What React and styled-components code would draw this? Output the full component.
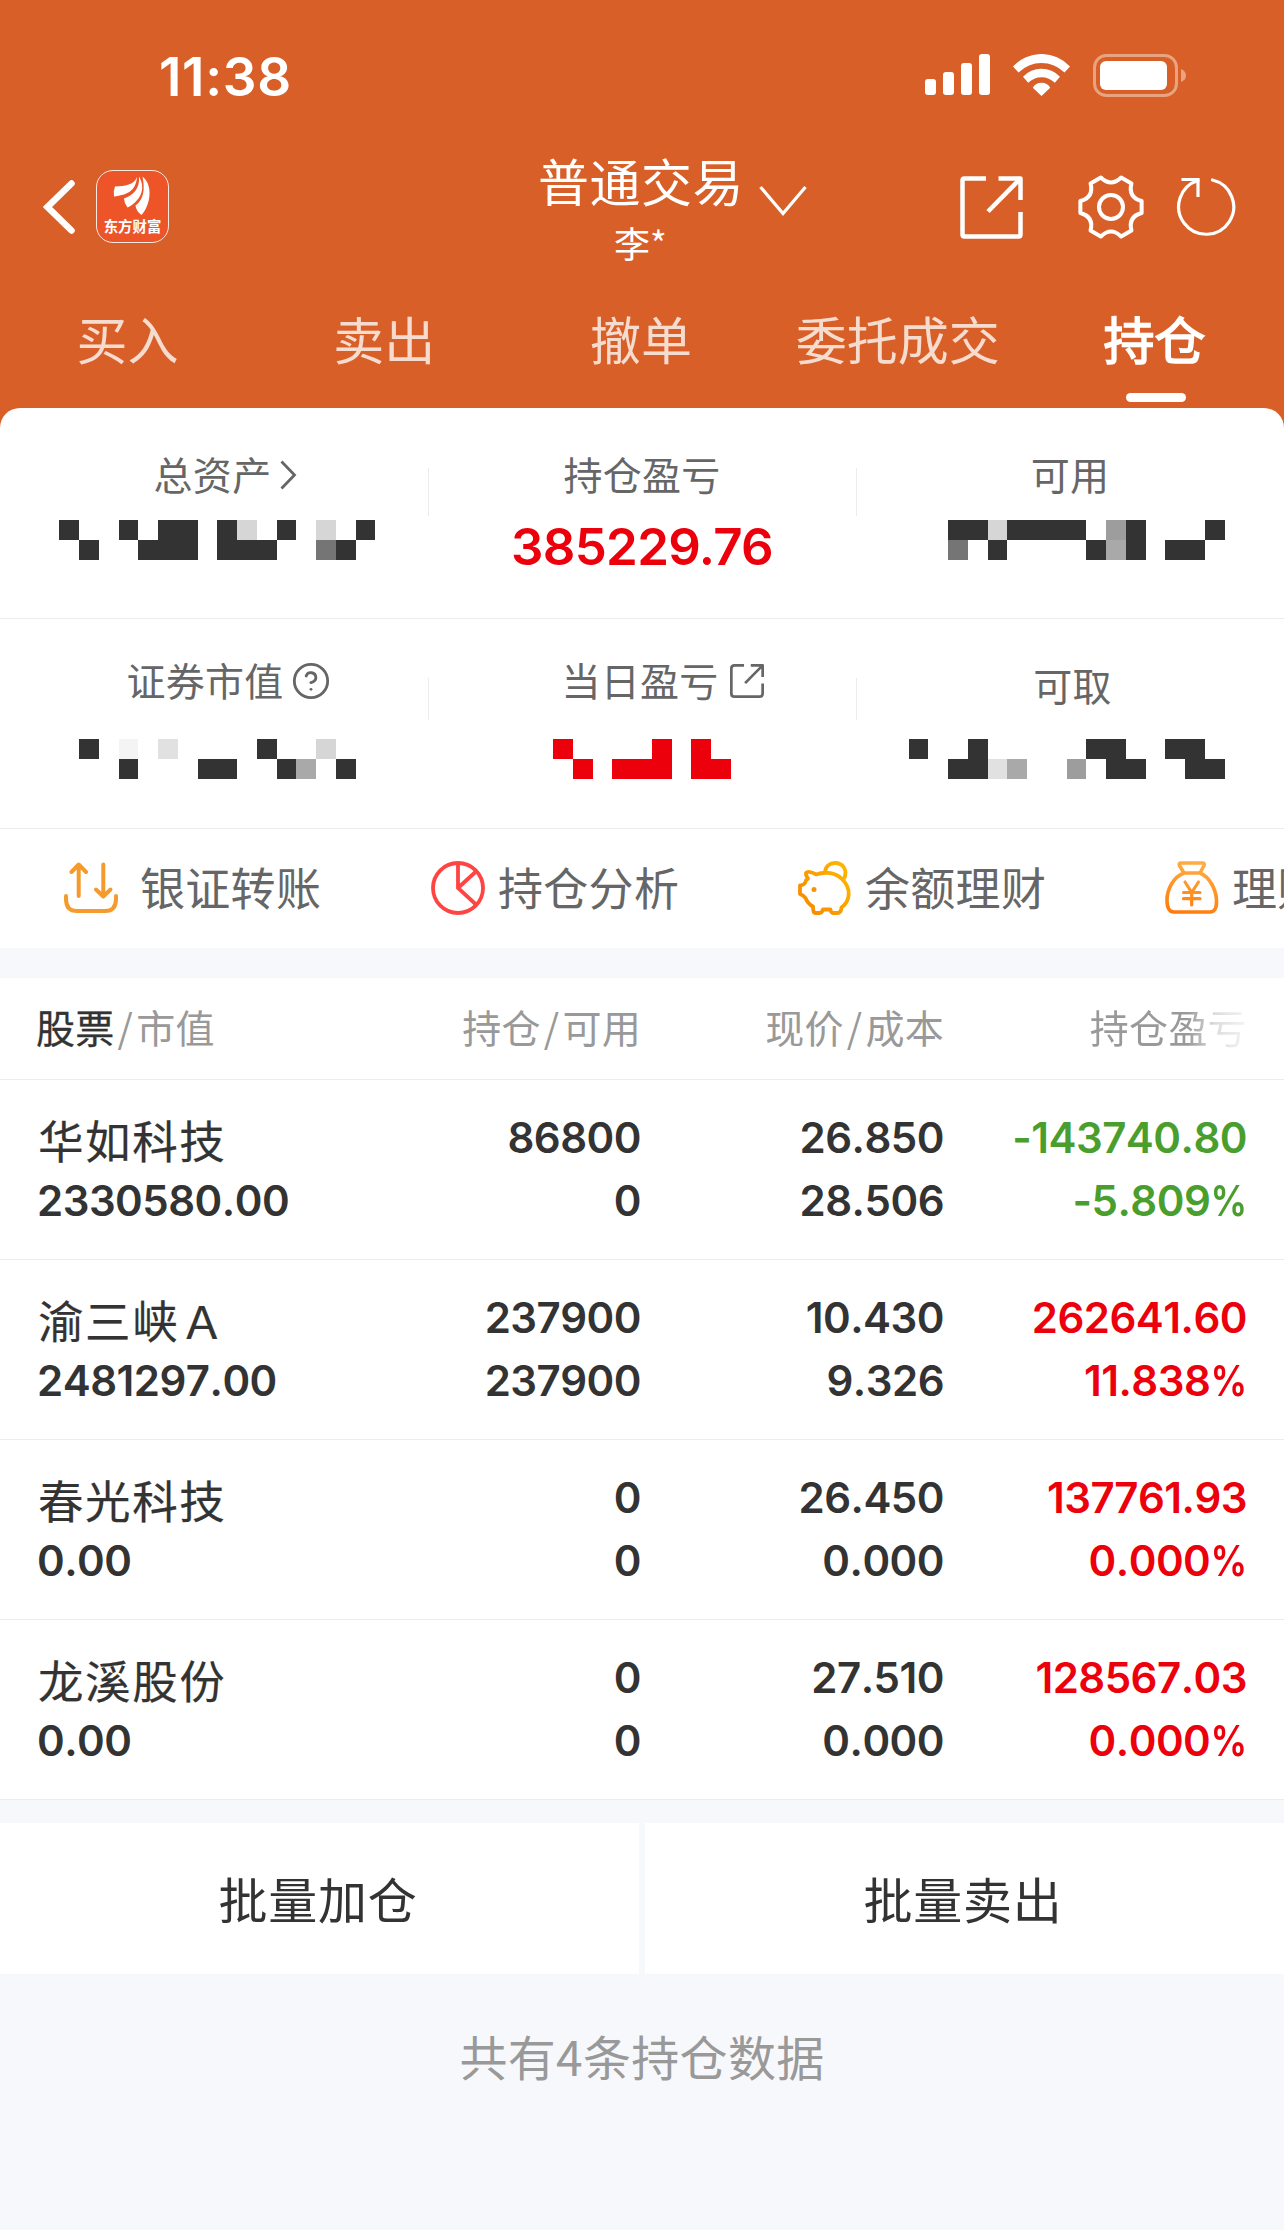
import styled, { createGlobalStyle } from 'styled-components'
import { FiHelpCircle } from 'react-icons/fi'

const GlobalStyle = createGlobalStyle`
  * {
    box-sizing: border-box;
  }

  body {
    margin: 0;
    background-color: #f7f8fb;
    color: #333;
    font-family: 'Noto Sans CJK SC', 'Inter', sans-serif;
  }
`

const Page = styled.div`
  width: 1284px;
  min-height: 2230px;
  overflow: hidden;
  background-color: #f7f8fb;
`

const Top = styled.header`
  background-color: #d85f28;
`

const StatusBar = styled.div`
  display: flex;
  justify-content: space-between;
  align-items: center;
  height: 150px;
  padding: 0 96px 0 159px;
`

const Time = styled.span`
  padding-top: 3px;
  font-family: 'Inter', sans-serif;
  font-size: 53px;
  font-weight: 600;
  line-height: 60px;
  letter-spacing: 0.7px;
  color: #fff;
`

const StatusIcons = styled.div`
  display: flex;
  align-items: center;
  gap: 23px;
`

const NavBar = styled.div`
  display: grid;
  grid-template-columns: 1fr 208px 1fr;
  height: 112px;
  color: #fff;
`

const NavLeft = styled.div`
  display: flex;
  align-items: center;
  gap: 20px;
  padding: 0 0 3px 43px;
`

const Logo = styled.div`
  display: flex;
  flex-direction: column;
  align-items: center;
  width: 73px;
  height: 73px;
  border: 1.5px solid #fbe9e0;
  border-radius: 17px;
  background-color: #ed5427;
`

const LogoText = styled.span`
  font-size: 14.4px;
  font-weight: 700;
  line-height: 16px;
`

const NavTitle = styled.div`
  padding-right: 3px;
  text-align: center;
  white-space: nowrap;
`

const Title = styled.h1`
  margin: 0;
  font-size: 51px;
  font-weight: 400;
  line-height: 60px;
  letter-spacing: 0.5px;
`

const UserName = styled.p`
  margin: 0;
  padding-top: 8px;
  font-size: 36px;
  line-height: 48px;
`

const NavRight = styled.div`
  display: flex;
  align-items: center;
  padding: 0 46px 2px 13px;
`

const Actions = styled.div`
  display: flex;
  align-items: center;
  margin-left: auto;
`

const Tabs = styled.nav`
  display: grid;
  grid-template-columns: repeat(5, 1fr);
  height: 146px;
`

const Tab = styled.div`
  display: flex;
  flex-direction: column;
  align-items: center;
  padding-top: 45px;
  font-size: 51px;
  line-height: 62px;
  text-indent: -2px;
  color: ${({ $active }) => ($active ? '#fff' : '#f6dccf')};
  -webkit-text-stroke: ${({ $active }) => ($active ? '1.6px' : '0')};

  &::after {
    content: '';
    width: 60px;
    height: 9px;
    margin-top: 24px;
    border-radius: 5px;
    background-color: ${({ $active }) => ($active ? '#fff' : 'transparent')};
  }
`

const Summary = styled.section`
  border-radius: 20px 20px 0 0;
  background-color: #fff;
`

const StatRow = styled.div`
  display: grid;
  grid-template-columns: repeat(3, 428px);
  height: ${({ $height }) => $height}px;
  border-bottom: 1px solid #ececec;
`

const Stat = styled.div`
  display: flex;
  flex-direction: column;
  background: linear-gradient(#ececec, #ececec) no-repeat
    0 ${({ $lineTop }) => $lineTop}px / 1px ${({ $lineHeight }) => $lineHeight}px;

  &:first-child {
    background: none;
  }
`

const StatLabel = styled.div`
  display: flex;
  justify-content: center;
  align-items: center;
  gap: ${({ $gap }) => $gap || 0}px;
  height: 50px;
  margin-top: ${({ $top }) => $top}px;
  padding-left: ${({ $indent }) => $indent || 0}px;
  font-size: 39px;
  line-height: 50px;
  letter-spacing: 0.3px;
  color: #666;

  svg {
    margin-top: 4px;
  }
`

const StatValue = styled.div`
  margin-top: 18px;
  font-family: 'Inter', sans-serif;
  font-size: 51px;
  font-weight: 600;
  line-height: 62px;
  letter-spacing: -0.7px;
  text-align: center;
  color: #ec000c;
`

const MosaicGrid = styled.div`
  display: grid;
  grid-template-columns: repeat(${({ $columns }) => $columns}, 19.754px);
  grid-auto-rows: 20px;
  margin-top: ${({ $top }) => $top}px;
  margin-left: ${({ $left }) => $left}px;
`

const MosaicCell = styled.span`
  background-color: ${({ $color }) => $color};
`

const Tools = styled.div`
  display: flex;
  height: 119px;
  padding-left: 64px;
  overflow: hidden;
`

const Tool = styled.div`
  display: flex;
  flex: none;
  align-items: center;
  gap: ${({ $gap }) => $gap}px;
  width: 367px;
  font-size: 45px;
  line-height: 60px;
  letter-spacing: 0.3px;
  color: #666;
  white-space: nowrap;

  svg {
    margin-top: -2px;
  }
`

const ToolText = styled.span`
  margin-top: -4px;
`

const Holdings = styled.section`
  margin-top: 30px;
  background-color: #fff;
`

const HoldingsRow = styled.div`
  display: grid;
  grid-template-columns: 1fr 302px 303px 303px;
  height: 180px;
  padding: 26px 37px 0 38px;
  border-bottom: 1px solid #ececec;
`

const HoldingsHead = styled(HoldingsRow)`
  height: 102px;
  padding-top: 23px;
  font-size: 39px;
  line-height: 50px;
  letter-spacing: 0.3px;
  color: #999;
`

const HeadCell = styled.div`
  text-align: ${({ $left }) => ($left ? 'left' : 'right')};
  margin-left: ${({ $left }) => ($left ? -2 : 0)}px;

  strong {
    font-weight: 400;
    color: #333;
    -webkit-text-stroke: 0.3px;
  }

  i {
    margin: 0 3px;
    font-style: normal;
  }
`

const FadingText = styled.span`
  background: linear-gradient(to right, #999 62%, #ddd 80%, #f4f4f4);
  background-clip: text;
  color: transparent;
`

const Cell = styled.div`
  display: flex;
  flex-direction: column;
  font-family: 'Inter', sans-serif;
  font-size: 42px;
  font-weight: 600;
  font-kerning: none;
  line-height: 63px;
  letter-spacing: -0.5px;
  text-align: right;
  color: ${({ $tone }) => ($tone === 'up' ? '#ec000c' : $tone === 'down' ? '#4a9e2e' : '#333')};
`

// 百分号比数字窄一些
const Percent = styled.span`
  display: inline-block;
  margin-left: -5px;
  transform: scaleX(0.87);
  transform-origin: right;
`

const StockCell = styled(Cell)`
  text-align: left;
  margin-left: -1px;
`

const StockName = styled.span`
  margin: 2px 0 -2px 1px;
  font-family: 'Noto Sans CJK SC', sans-serif;
  font-size: 45.5px;
  font-weight: 400;
  letter-spacing: 1.6px;
  -webkit-text-stroke: 0.2px;
`

const BatchActions = styled.div`
  display: grid;
  grid-template-columns: 639px 639px;
  gap: 6px;
  margin-top: 23px;
`

const BatchButton = styled.button`
  height: 151px;
  padding: 0 3px 3px 0;
  border: none;
  background-color: #fff;
  font-family: inherit;
  font-size: 49px;
  letter-spacing: 0.7px;
  color: #333;
`

const Footer = styled.p`
  margin: 0;
  padding-top: 46px;
  font-size: 48px;
  line-height: 70px;
  letter-spacing: 0.3px;
  text-align: center;
  color: #999;
`

const mosaicColors = {
  d: '#333',
  r: '#ec000c',
  m: '#757575',
  g: '#9d9d9d',
  a: '#a9a9a9',
  l: '#d6d6d6',
  e: '#e1e1e1',
  w: '#f4f4f4',
  '.': 'transparent',
}

const holdings = [
  { name: '华如科技', value: '2330580.00', amount: '86800', usable: '0', price: '26.850', cost: '28.506', profit: '-143740.80', rate: '-5.809', tone: 'down' },
  { name: '渝三峡Ａ', value: '2481297.00', amount: '237900', usable: '237900', price: '10.430', cost: '9.326', profit: '262641.60', rate: '11.838', tone: 'up' },
  { name: '春光科技', value: '0.00', amount: '0', usable: '0', price: '26.450', cost: '0.000', profit: '137761.93', rate: '0.000', tone: 'up' },
  { name: '龙溪股份', value: '0.00', amount: '0', usable: '0', price: '27.510', cost: '0.000', profit: '128567.03', rate: '0.000', tone: 'up' },
]

// 隐藏金额的马赛克
function Mosaic({ rows, top, left }) {
  return (
    <MosaicGrid $columns={rows[0].length} $top={top} $left={left}>
      {rows.join('').split('').map((c, i) => (
        <MosaicCell key={i} $color={mosaicColors[c]} />
      ))}
    </MosaicGrid>
  )
}

function SignalIcon() {
  return (
    <svg width="65" height="42" fill="#fff">
      <rect x="0" y="25" width="11" height="16" rx="3" />
      <rect x="18" y="18" width="11" height="23" rx="3" />
      <rect x="36" y="9" width="11" height="32" rx="3" />
      <rect x="54" y="0" width="11" height="41" rx="3" />
    </svg>
  )
}

function WifiIcon() {
  return (
    <svg width="57" height="43" fill="#fff">
      <path d="M0 12.5A38.7 38.7 0 0 1 57 12.5L51.5 18.5A32.6 32.6 0 0 0 5.5 18.5Z" />
      <path d="M10 22.7A25.4 25.4 0 0 1 47 22.7L41.8 28.7A19 19 0 0 0 15.2 28.7Z" />
      <path d="M19.8 33.7A10 10 0 0 1 37.2 33.7L28.5 42Z" />
    </svg>
  )
}

function BatteryIcon() {
  return (
    <svg width="95" height="43">
      <rect x="1.5" y="1.5" width="82" height="40" rx="12" fill="none" stroke="#e8a480" strokeWidth="3" />
      <rect x="7" y="7" width="67" height="29" rx="6" fill="#fff" />
      <path d="M88 15Q93 17 93 21.5Q93 26 88 28Z" fill="#e8a480" />
    </svg>
  )
}

function BackIcon() {
  return (
    <svg width="33" height="56" fill="none" stroke="#fff" strokeWidth="6.5" strokeLinecap="round">
      <path d="M28.5 4.5L4.5 28L28.5 51.5" />
    </svg>
  )
}

function LogoMark() {
  return (
    <svg width="70" height="47" fill="#fff">
      <path d="M39 6C36 14 27 15 17 15.5Q15 20 16 25.5C29 24 38 20 39 6Z" />
      <path d="M41 5.5C42 17 36 24 26 27.5Q26 32 29.5 36.5C41 31 49 19 41 5.5Z" />
      <path d="M44.5 5.5C47 18 46 28 37.5 34.5Q38 40 43.5 44C52 35 56 15 44.5 5.5Z" />
    </svg>
  )
}

const DownSvg = styled.svg`
  display: block;
  margin-bottom: 12px;
`

function ArrowDownIcon() {
  return (
    <DownSvg width="48" height="32" fill="none" stroke="#fff" strokeWidth="3.2">
      <path d="M1.5 2L24 28.5L46.5 2" />
    </DownSvg>
  )
}

function ShareIcon({ size, color, stroke, radius = 2 }) {
  return (
    <svg width={size} height={size} viewBox="0 0 63 63" fill="none" stroke={color} strokeWidth={stroke} strokeLinejoin="round">
      <path d={`M26 2.5H${2.5 + radius}Q2.5 2.5 2.5 ${2.5 + radius}V${60.5 - radius}Q2.5 60.5 ${2.5 + radius} 60.5H${60.5 - radius}Q60.5 60.5 60.5 ${60.5 - radius}V36`} />
      <path d="M38.5 2.5H60.5V24M60.5 2.5L28 35.5" />
    </svg>
  )
}

function polar(r, deg) {
  const t = (deg * Math.PI) / 180
  return `${(34 + r * Math.cos(t)).toFixed(2)} ${(34 + r * Math.sin(t)).toFixed(2)}`
}

const GearSvg = styled.svg`
  margin: 0 31px 0 54px;
`

function GearIcon() {
  const teeth = [0, 60, 120, 180, 240, 300]
  const d = teeth.map((a, i) => `${i ? 'L' : 'M'}${polar(31.2, a - 11)}L${polar(31.2, a + 11)}Q${polar(19.5, a + 30)} ${polar(31.2, a + 49)}`).join('')
  return (
    <GearSvg width="68" height="68" fill="none" stroke="#fff" strokeWidth="4" strokeLinejoin="round">
      <path d={`${d}Z`} />
      <circle cx="34" cy="34" r="12" />
    </GearSvg>
  )
}

function RefreshIcon() {
  return (
    <svg width="62" height="62" fill="none" stroke="#fff" strokeWidth="3.2">
      <path d="M36.5 4A27.5 27.5 0 1 1 22 4.5" strokeLinecap="round" />
      <path d="M5.5 3.5H22V21" />
    </svg>
  )
}

function ChevronIcon() {
  return (
    <svg width="17" height="30" fill="none" stroke="#666" strokeWidth="2.8">
      <path d="M1.5 1.5L14.5 15L1.5 28.5" />
    </svg>
  )
}

function TransferIcon() {
  return (
    <svg width="54" height="52" fill="none" stroke="#f59b2d" strokeWidth="4" strokeLinecap="round" strokeLinejoin="round">
      <path d="M14.7 34V3M7.5 10L14.7 2.5L22 10" />
      <path d="M39.3 2.5V34M32 27.5L39.3 34.5L46.5 27.5" />
      <path d="M2 34V37Q2 49 13 49H41Q52 49 52 37V34" />
    </svg>
  )
}

function PieIcon() {
  return (
    <svg width="54" height="54" fill="none" stroke="#ff4444" strokeWidth="3.8">
      <circle cx="27" cy="27" r="25" />
      <path d="M27 2V27L45.5 44M27 27L45.5 10" />
    </svg>
  )
}

function PiggyIcon() {
  return (
    <svg width="54" height="54" fill="none" stroke="url(#piggy)" strokeWidth="3.8" strokeLinejoin="round">
      <defs>
        <linearGradient id="piggy" gradientUnits="userSpaceOnUse" x1="0" y1="54" x2="54" y2="10">
          <stop offset="0" stopColor="#f58400" />
          <stop offset="1" stopColor="#ffb700" />
        </linearGradient>
      </defs>
      <path d="M8 12Q9 10.5 12 11Q16 12 18 13.5C28 10 38 12 44 18C54 28 52 40 43.5 46.5Q43 52 39.5 52H35Q33 52 32.5 48.5H25Q24 52 21.5 52H17Q15 52 15 45.5Q10 43 7.5 37Q6 34.5 2 33V24.5Q6 24 7 22Q7.5 19 10 17.5Q7.5 14 8 12Z" />
      <path d="M27 12C27 5 32 2 37 2C45 2 50 9 46 18" />
      <circle cx="16" cy="28.5" r="2.5" fill="#f99400" stroke="none" />
    </svg>
  )
}

function MoneyBagIcon() {
  return (
    <svg width="54" height="54" fill="none" stroke="url(#bag)" strokeWidth="3.6" strokeLinejoin="round">
      <defs>
        <linearGradient id="bag" gradientUnits="userSpaceOnUse" x1="30" y1="0" x2="20" y2="54">
          <stop offset="0" stopColor="#ffae45" />
          <stop offset="1" stopColor="#ff7a0a" />
        </linearGradient>
      </defs>
      <path d="M16 2H37.5Q40 2 39 4.5L35 12H19L14.5 4.5Q13.5 2 16 2Z" />
      <path d="M19 12C8 16 2 29 2 39Q2 51 9 51H45Q52 51 51.5 39C51 29 45 16 35 12" />
      <path d="M20 21L26.7 31.5L33.5 21M26.7 31.5V44M18.5 31.5H35M18.5 37.7H35" strokeWidth="3.2" strokeLinecap="round" />
    </svg>
  )
}

export default function App() {
  const tabs = ['买入', '卖出', '撤单', '委托成交', '持仓']

  return (
    <Page>
      <GlobalStyle />
      <Top>
        <StatusBar>
          <Time>11:38</Time>
          <StatusIcons>
            <SignalIcon />
            <WifiIcon />
            <BatteryIcon />
          </StatusIcons>
        </StatusBar>

        <NavBar>
          <NavLeft>
            <BackIcon />
            <Logo>
              <LogoMark />
              <LogoText>东方财富</LogoText>
            </Logo>
          </NavLeft>
          <NavTitle>
            <Title>普通交易</Title>
            <UserName>李*</UserName>
          </NavTitle>
          <NavRight>
            <ArrowDownIcon />
            <Actions>
              <ShareIcon size={63} color="#fff" stroke={4.5} />
              <GearIcon />
              <RefreshIcon />
            </Actions>
          </NavRight>
        </NavBar>

        <Tabs>
          {tabs.map(tab => (
            <Tab key={tab} $active={tab === '持仓'}>{tab}</Tab>
          ))}
        </Tabs>

        <Summary>
          <StatRow $height={211}>
            <Stat>
              <StatLabel $top={40} $gap={9} $indent={23}>总资产<ChevronIcon /></StatLabel>
              <Mosaic top={22} left={59.25} rows={['d..d.dd.dl.d.l.d', '.d..ddd.ddd..md.']} />
            </Stat>
            <Stat $lineTop={60} $lineHeight={48}>
              <StatLabel $top={40}>持仓盈亏</StatLabel>
              <StatValue>385229.76</StatValue>
            </Stat>
            <Stat $lineTop={60} $lineHeight={48}>
              <StatLabel $top={40}>可用</StatLabel>
              <Mosaic top={22} left={92.2} rows={['ddldddd.gd...d', 'm.d....dad.dd.']} />
            </Stat>
          </StatRow>

          <StatRow $height={210}>
            <Stat>
              <StatLabel $top={35} $gap={7} $indent={29}>证券市值<FiHelpCircle size={40} strokeWidth={1.7} /></StatLabel>
              <Mosaic top={35} left={79} rows={['d.w.e....d..l.', '..d...dd..da.d']} />
            </Stat>
            <Stat $lineTop={59} $lineHeight={42}>
              <StatLabel $top={35} $gap={11} $indent={41}>当日盈亏<ShareIcon size={34} color="#666" stroke={5} radius={6} /></StatLabel>
              <Mosaic top={35} left={125.1} rows={['r....r.r.', '.r.rrr.rr']} />
            </Stat>
            <Stat $lineTop={59} $lineHeight={42}>
              <StatLabel $top={40} $indent={5}>可取</StatLabel>
              <Mosaic top={30} left={52.7} rows={['d..d.....dd..dd.', '..ddea..g.dd..dd']} />
            </Stat>
          </StatRow>

          <Tools>
            <Tool $gap={22}><TransferIcon /><ToolText>银证转账</ToolText></Tool>
            <Tool $gap={13}><PieIcon /><ToolText>持仓分析</ToolText></Tool>
            <Tool $gap={13}><PiggyIcon /><ToolText>余额理财</ToolText></Tool>
            <Tool $gap={13}><MoneyBagIcon /><ToolText>理财</ToolText></Tool>
          </Tools>
        </Summary>
      </Top>

      <Holdings>
        <HoldingsHead>
          <HeadCell $left><strong>股票</strong><i>/</i>市值</HeadCell>
          <HeadCell>持仓<i>/</i>可用</HeadCell>
          <HeadCell>现价<i>/</i>成本</HeadCell>
          <HeadCell><FadingText>持仓盈亏</FadingText></HeadCell>
        </HoldingsHead>
        {holdings.map(item => (
          <HoldingsRow key={item.name}>
            <StockCell>
              <StockName>{item.name}</StockName>
              <span>{item.value}</span>
            </StockCell>
            <Cell>
              <span>{item.amount}</span>
              <span>{item.usable}</span>
            </Cell>
            <Cell>
              <span>{item.price}</span>
              <span>{item.cost}</span>
            </Cell>
            <Cell $tone={item.tone}>
              <span>{item.profit}</span>
              <span>{item.rate}<Percent>%</Percent></span>
            </Cell>
          </HoldingsRow>
        ))}
      </Holdings>

      <BatchActions>
        <BatchButton>批量加仓</BatchButton>
        <BatchButton>批量卖出</BatchButton>
      </BatchActions>

      <Footer>共有4条持仓数据</Footer>
    </Page>
  )
}
